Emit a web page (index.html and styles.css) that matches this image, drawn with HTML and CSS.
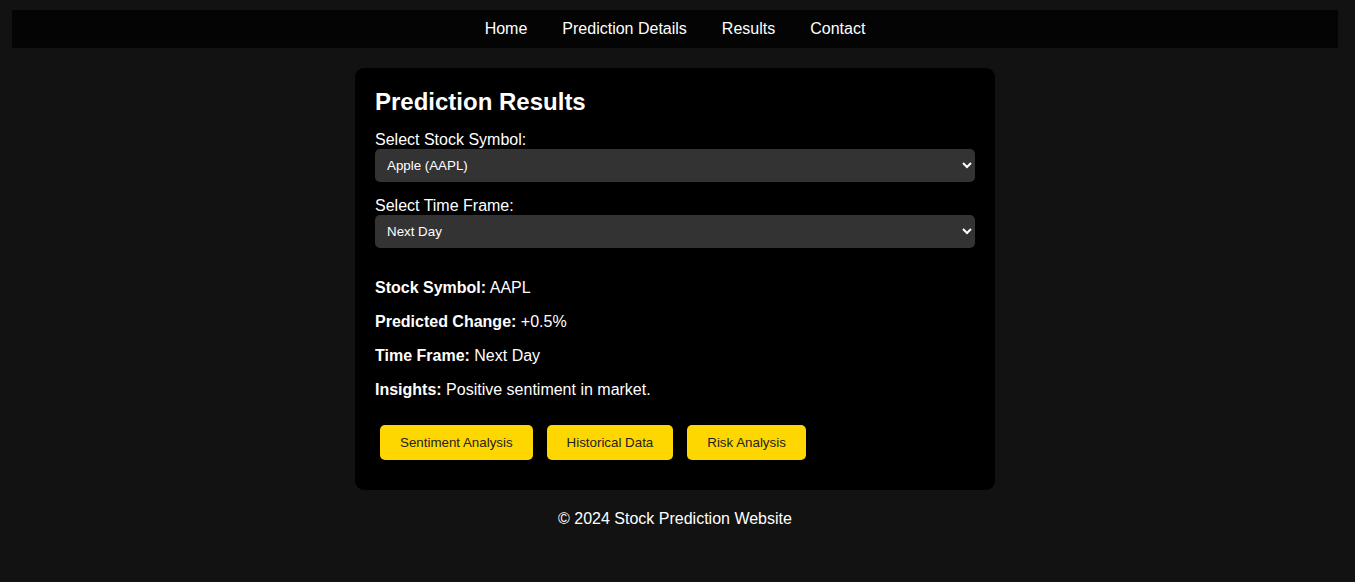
FILE: index.html
```html
<!DOCTYPE html>
<html lang="en">
<head>
<meta charset="utf-8">
<title>Prediction Results</title>
<link rel="stylesheet" href="styles.css">
</head>
<body>
<nav class="nav">
  <a href="#" class="nav-link">Home</a>
  <a href="#" class="nav-link">Prediction Details</a>
  <a href="#" class="nav-link">Results</a>
  <a href="#" class="nav-link">Contact</a>
</nav>
<main class="card">
  <h2 class="title">Prediction Results</h2>
  <label class="field-label" for="stock">Select Stock Symbol:</label>
  <select id="stock" class="select">
    <option>Apple (AAPL)</option>
  </select>
  <label class="field-label" for="frame">Select Time Frame:</label>
  <select id="frame" class="select">
    <option>Next Day</option>
  </select>
  <div class="results">
    <p class="row"><strong>Stock Symbol:</strong> AAPL</p>
    <p class="row"><strong>Predicted Change:</strong> +0.5%</p>
    <p class="row"><strong>Time Frame:</strong> Next Day</p>
    <p class="row"><strong>Insights:</strong> Positive sentiment in market.</p>
  </div>
  <div class="actions">
    <button class="btn">Sentiment Analysis</button>
    <button class="btn">Historical Data</button>
    <button class="btn">Risk Analysis</button>
  </div>
</main>
<footer class="footer">© 2024 Stock Prediction Website</footer>
</body>
</html>
```
FILE: styles.css
```css
html {
  background: #121212;
}
body {
  margin: 10px 17px 10px 12px;
  background: #121212;
  color: #fff;
  font-family: "Liberation Sans", Arial, sans-serif;
  font-size: 16px;
}
.nav {
  background: #040404;
  height: 38px;
  display: flex;
  justify-content: center;
  align-items: center;
  gap: 35px;
}
.nav-link {
  color: #fff;
  text-decoration: none;
  font-size: 16px;
}
.card {
  width: 600px;
  margin: 20px auto 0;
  padding: 20px;
  background: #000;
  border-radius: 9px;
}
.title {
  margin: 0 0 15px;
  font-size: 24px;
  font-weight: bold;
  line-height: 28px;
}
.field-label {
  display: block;
  line-height: 18px;
}
.select {
  display: block;
  width: 100%;
  height: 33px;
  margin: 0 0 15px;
  padding: 0 8px;
  background: #333;
  color: #fff;
  border: none;
  border-radius: 5px;
  font-family: "Liberation Sans", Arial, sans-serif;
  font-size: 13.333px;
  color-scheme: dark;
}
.results {
  padding-top: 16px;
}
.row {
  margin: 0 0 16px;
  line-height: 18px;
}
.actions {
  display: flex;
  gap: 14px;
  padding: 5px 5px 10px;
  margin-top: 21px;
}
.btn {
  height: 35px;
  padding: 0 20px;
  background: #ffd700;
  color: #222;
  border: none;
  border-radius: 5px;
  font-family: "Liberation Sans", Arial, sans-serif;
  font-size: 13.333px;
}
.footer {
  text-align: center;
  margin-top: 20px;
  line-height: 18px;
}
```
